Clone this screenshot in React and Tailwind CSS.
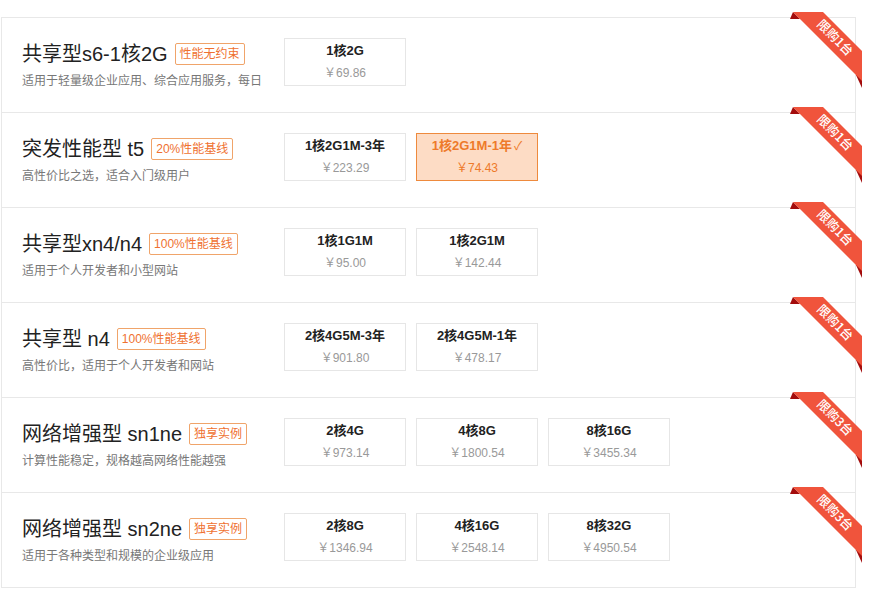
import React from "react";

const rows = [
  {
    title: "共享型s6-1核2G",
    tag: "性能无约束",
    desc: "适用于轻量级企业应用、综合应用服务，每日",
    limit: "限购1台",
    opts: [{ name: "1核2G", price: "￥69.86" }],
  },
  {
    title: "突发性能型 t5",
    tag: "20%性能基线",
    desc: "高性价比之选，适合入门级用户",
    limit: "限购1台",
    opts: [
      { name: "1核2G1M-3年", price: "￥223.29" },
      { name: "1核2G1M-1年", price: "￥74.43", sel: true },
    ],
  },
  {
    title: "共享型xn4/n4",
    tag: "100%性能基线",
    desc: "适用于个人开发者和小型网站",
    limit: "限购1台",
    opts: [
      { name: "1核1G1M", price: "￥95.00" },
      { name: "1核2G1M", price: "￥142.44" },
    ],
  },
  {
    title: "共享型 n4",
    tag: "100%性能基线",
    desc: "高性价比，适用于个人开发者和网站",
    limit: "限购1台",
    opts: [
      { name: "2核4G5M-3年", price: "￥901.80" },
      { name: "2核4G5M-1年", price: "￥478.17" },
    ],
  },
  {
    title: "网络增强型 sn1ne",
    tag: "独享实例",
    desc: "计算性能稳定，规格越高网络性能越强",
    limit: "限购3台",
    opts: [
      { name: "2核4G", price: "￥973.14" },
      { name: "4核8G", price: "￥1800.54" },
      { name: "8核16G", price: "￥3455.34" },
    ],
  },
  {
    title: "网络增强型 sn2ne",
    tag: "独享实例",
    desc: "适用于各种类型和规模的企业级应用",
    limit: "限购3台",
    opts: [
      { name: "2核8G", price: "￥1346.94" },
      { name: "4核16G", price: "￥2548.14" },
      { name: "8核32G", price: "￥4950.54" },
    ],
  },
];

function Ribbon({ text }) {
  return (
    <svg
      className="absolute top-[-6px] right-[-7px]"
      width="72"
      height="78"
      viewBox="0 0 72 78"
    >
      <polygon points="0,7 3,0 10,7" fill="#a30d0d" />
      <polygon points="66,63 72,63 72,76" fill="#a30d0d" />
      <polygon points="3,0 33,0 72,39 72,69" fill="#f0543c" />
      <text
        x="0"
        y="0"
        transform="translate(46,25) rotate(45)"
        textAnchor="middle"
        dominantBaseline="central"
        fill="#ffffff"
        fontSize="12.5"
        fontWeight="500"
        fontFamily="'Noto Sans CJK SC', sans-serif"
      >
        {text}
      </text>
    </svg>
  );
}

function Option({ o }) {
  return (
    <div
      className={
        "w-[122px] h-[48px] border flex flex-col items-center pt-[3px] " +
        (o.sel ? "bg-[#fddcc5] border-[#ee8a3d]" : "bg-white border-[#e6e6e6]")
      }
    >
      <div
        className={
          "text-[13px] leading-[18px] font-bold " +
          (o.sel ? "text-[#ee7a2a]" : "text-[#222]")
        }
      >
        {o.name}
        {o.sel && <span className="font-normal ml-[2px] text-[12px]">✓</span>}
      </div>
      <div
        className={
          "text-[12px] leading-[18px] mt-[4px] " +
          (o.sel ? "text-[#ee7a2a]" : "text-[#999]")
        }
      >
        {o.price}
      </div>
    </div>
  );
}

export default function App() {
  return (
    <div
      className="w-[871px] h-[593px] bg-white pt-[17px]"
      style={{ fontFamily: "'Liberation Sans', 'Noto Sans CJK SC', sans-serif" }}
    >
      <div className="ml-[1px] w-[855px] border border-[#e8e8e8] border-b-0">
        {rows.map((r, i) => (
          <div
            key={i}
            className="relative flex h-[95px] border-b border-[#e8e8e8]"
          >
            <div className="w-[282px] pl-[20px] pt-[25px]">
              <div className="flex items-center h-[22px]">
                <span className="text-[20px] leading-[22px] text-[#222]">
                  {r.title}
                </span>
                <span className="ml-[7px] border border-[#f0a46a] text-[#ef7130] text-[12px] leading-[20px] px-[4px] rounded-[2px]">
                  {r.tag}
                </span>
              </div>
              <div className="mt-[8px] text-[12px] leading-[16px] text-[#777]">
                {r.desc}
              </div>
            </div>
            <div className="flex gap-[10px] pt-[20px]">
              {r.opts.map((o, j) => (
                <Option key={j} o={o} />
              ))}
            </div>
            <Ribbon text={r.limit} />
          </div>
        ))}
      </div>
    </div>
  );
}
